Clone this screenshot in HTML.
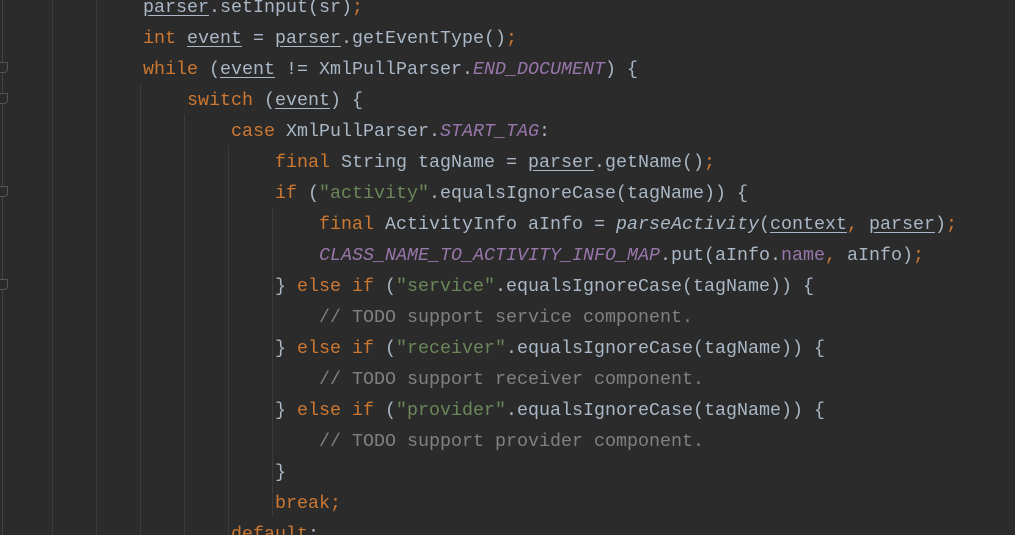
<!DOCTYPE html>
<html><head><meta charset="utf-8"><style>
html,body{margin:0;padding:0;background:#2b2b2b;width:1015px;height:535px;overflow:hidden;position:relative}
.code{position:absolute;left:143px;top:-8px;margin:0;font-family:"Liberation Mono","DejaVu Sans Mono",monospace;font-size:18.33px;line-height:31px;color:#a9b7c6;white-space:pre}
.k{color:#cc7832}.s{color:#6a8759}.p{color:#9876aa}.i{font-style:italic}.c{color:#808080}
.u{text-decoration:underline;text-decoration-color:#a9b7c6;text-underline-offset:3px}
.g{position:absolute;width:1px;background:#3b3b3b}
.fold{position:absolute;left:0;width:7px;height:9px;border:1px solid #555;border-left:none;border-radius:0 0 4px 0;background:#2b2b2b}
</style></head><body>
<div class="g" style="left:2px;top:0;height:535px;background:#444"></div>
<div class="g" style="left:52px;top:0;height:535px"></div>
<div class="g" style="left:96px;top:0;height:535px"></div>
<div class="g" style="left:140px;top:83px;height:452px"></div>
<div class="g" style="left:184px;top:114px;height:421px"></div>
<div class="g" style="left:228px;top:145px;height:390px"></div>
<div class="g" style="left:272px;top:207px;height:310px"></div>
<div class="fold" style="top:62px"></div>
<div class="fold" style="top:93px"></div>
<div class="fold" style="top:186px"></div>
<div class="fold" style="top:279px"></div>
<pre class="code"><span class="u">parser</span>.setInput(sr)<span class="k">;</span>
<span class="k">int </span><span class="u">event</span> = <span class="u">parser</span>.getEventType()<span class="k">;</span>
<span class="k">while </span>(<span class="u">event</span> != XmlPullParser.<span class="p i">END_DOCUMENT</span>) {
    <span class="k">switch </span>(<span class="u">event</span>) {
        <span class="k">case </span>XmlPullParser.<span class="p i">START_TAG</span>:
            <span class="k">final </span>String tagName = <span class="u">parser</span>.getName()<span class="k">;</span>
            <span class="k">if </span>(<span class="s">"activity"</span>.equalsIgnoreCase(tagName)) {
                <span class="k">final </span>ActivityInfo aInfo = <span class="i">parseActivity</span>(<span class="u">context</span><span class="k">, </span><span class="u">parser</span>)<span class="k">;</span>
                <span class="p i">CLASS_NAME_TO_ACTIVITY_INFO_MAP</span>.put(aInfo.<span class="p">name</span><span class="k">, </span>aInfo)<span class="k">;</span>
            } <span class="k">else if </span>(<span class="s">"service"</span>.equalsIgnoreCase(tagName)) {
                <span class="c">// TODO support service component.</span>
            } <span class="k">else if </span>(<span class="s">"receiver"</span>.equalsIgnoreCase(tagName)) {
                <span class="c">// TODO support receiver component.</span>
            } <span class="k">else if </span>(<span class="s">"provider"</span>.equalsIgnoreCase(tagName)) {
                <span class="c">// TODO support provider component.</span>
            }
            <span class="k">break;</span>
        <span class="k">default</span>:
</pre>
</body></html>
